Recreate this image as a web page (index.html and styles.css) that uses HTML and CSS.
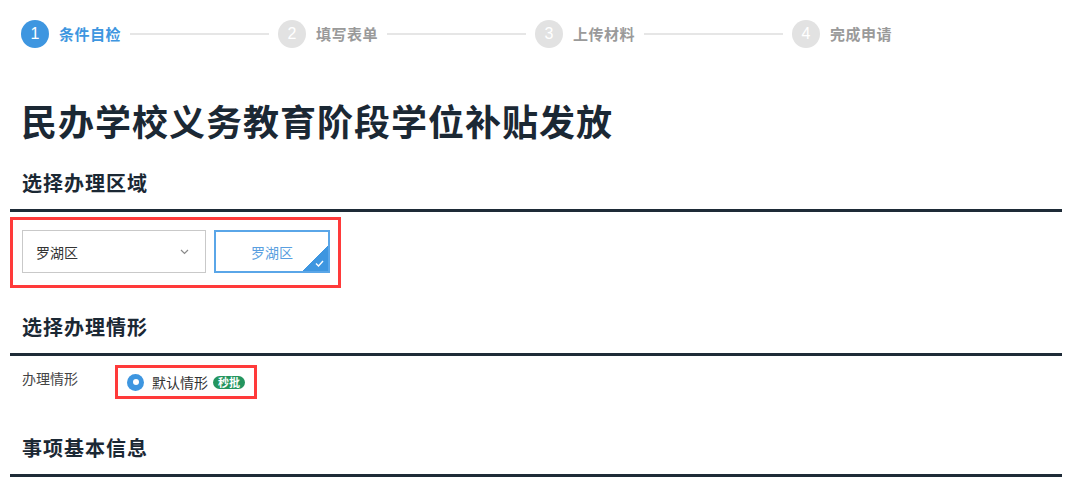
FILE: index.html
```html
<!DOCTYPE html>
<html lang="zh-CN">
<head>
<meta charset="utf-8">
<title>民办学校义务教育阶段学位补贴发放</title>
<link rel="stylesheet" href="styles.css">
</head>
<body>
<div class="page">
  <div class="steps">
    <div class="step active"><span class="num">1</span><span class="label">条件自检</span><span class="line"></span></div>
    <div class="step"><span class="num">2</span><span class="label">填写表单</span><span class="line"></span></div>
    <div class="step"><span class="num">3</span><span class="label">上传材料</span><span class="line"></span></div>
    <div class="step last"><span class="num">4</span><span class="label">完成申请</span></div>
  </div>

  <h1 class="title">民办学校义务教育阶段学位补贴发放</h1>

  <section class="sec">
    <h2 class="sec-title">选择办理区域</h2>
    <div class="region hl">
      <div class="select">
        <span class="select-text">罗湖区</span>
        <svg class="chev" width="9" height="6" viewBox="0 0 9 6"><path d="M1 1 L4.5 4.5 L8 1" fill="none" stroke="#8a8a8a" stroke-width="1.2"/></svg>
      </div>
      <div class="choice">
        <span>罗湖区</span>
        <span class="corner">
          <svg class="tick" width="9" height="7" viewBox="0 0 9 7"><path d="M1 3.5 L3.5 6 L8 1" fill="none" stroke="#fff" stroke-width="1.4"/></svg>
        </span>
      </div>
    </div>
  </section>

  <section class="sec sec2">
    <h2 class="sec-title">选择办理情形</h2>
    <div class="row">
      <span class="row-label">办理情形</span>
      <div class="opt hl">
        <span class="radio"></span>
        <span class="opt-text">默认情形</span>
        <span class="badge">秒批</span>
      </div>
    </div>
  </section>

  <section class="sec sec3">
    <h2 class="sec-title">事项基本信息</h2>
  </section>
</div>
</body>
</html>
```

FILE: styles.css
```css
* { box-sizing: border-box; }
html, body { margin: 0; padding: 0; background: #fff; }
body {
  font-family: "Noto Sans CJK SC", "Noto Sans", sans-serif;
  color: #333;
  width: 1080px;
  height: 478px;
  overflow: hidden;
}
.page { padding: 0 18px 0 10px; }

/* steps */
.steps {
  display: flex;
  align-items: center;
  padding: 20px 0 0 11px;
  height: 48px;
}
.step {
  display: flex;
  align-items: center;
  width: 257px;
  flex: none;
}
.step.last { width: auto; }
.num {
  width: 28px;
  height: 28px;
  border-radius: 50%;
  background: #e2e2e2;
  color: #fff;
  font-family: "Liberation Sans", sans-serif;
  font-size: 16px;
  display: flex;
  align-items: center;
  justify-content: center;
  flex: none;
}
.label {
  margin-left: 10px;
  font-size: 15px;
  font-weight: 700;
  letter-spacing: 0.5px;
  color: #9a9a9a;
  white-space: nowrap;
  line-height: 28px;
}
.line {
  flex: 1;
  height: 2px;
  background: #e6e6e6;
  margin: 0 9px 0 9px;
}
.step.active .num { background: #3e96e0; }
.step.active .label { color: #3e96e0; }

/* title */
.title {
  margin: 50px 0 0 11px;
  font-size: 36px;
  line-height: 44px;
  font-weight: 700;
  color: #1b2834;
  letter-spacing: 1px;
}

/* sections */
.sec { margin-top: 27px; }
.sec-title {
  margin: 0;
  padding: 0 0 12px 12px;
  font-size: 20px;
  line-height: 28px;
  font-weight: 700;
  color: #1b2834;
  border-bottom: 3px solid #1e2b37;
  letter-spacing: 1px;
}
.hl { border: 3px solid #ff3a3a; }

.region {
  margin-top: 5px;
  display: inline-flex;
  gap: 8px;
  padding: 10px 8px 12px 9px;
}
.select {
  width: 184px;
  height: 43px;
  border: 1px solid #c9c9c9;
  display: flex;
  align-items: center;
  justify-content: space-between;
  padding: 0 16px 0 13px;
  font-size: 14px;
  color: #333;
}
.chev { display: block; }
.choice {
  position: relative;
  width: 116px;
  height: 43px;
  border: 2px solid #5aa6e8;
  display: flex;
  align-items: center;
  justify-content: center;
  font-size: 14px;
  color: #5a9fe0;
  overflow: hidden;
}
.corner {
  position: absolute;
  right: 0;
  bottom: 0;
  width: 26px;
  height: 26px;
  background: linear-gradient(to bottom right, transparent 50%, #3e96e0 50%);
}
.tick { position: absolute; right: 4px; bottom: 4px; }

.sec2 { margin-top: 25px; }
.row {
  display: flex;
  align-items: flex-start;
  margin-top: 9px;
  padding-left: 12px;
}
.row-label {
  width: 93px;
  flex: none;
  font-size: 14px;
  line-height: 20px;
  margin-top: 3px;
  color: #444;
}
.opt {
  display: flex;
  align-items: center;
  height: 34px;
  padding: 0 9px 0 9px;
}
.radio {
  width: 17px;
  height: 17px;
  border-radius: 50%;
  background: #3e96e0;
  position: relative;
  flex: none;
}
.radio::after {
  content: "";
  position: absolute;
  left: 5.5px;
  top: 5.5px;
  width: 6px;
  height: 6px;
  border-radius: 50%;
  background: #fff;
}
.opt-text {
  margin-left: 8px;
  font-size: 14px;
  color: #333;
  line-height: 20px;
}
.badge {
  margin-left: 5px;
  background: #24955f;
  color: #fff;
  font-size: 11px;
  font-weight: 700;
  line-height: 13px;
  padding: 0 5px;
  border-radius: 7px;
}

.sec3 { margin-top: 35px; }
```
